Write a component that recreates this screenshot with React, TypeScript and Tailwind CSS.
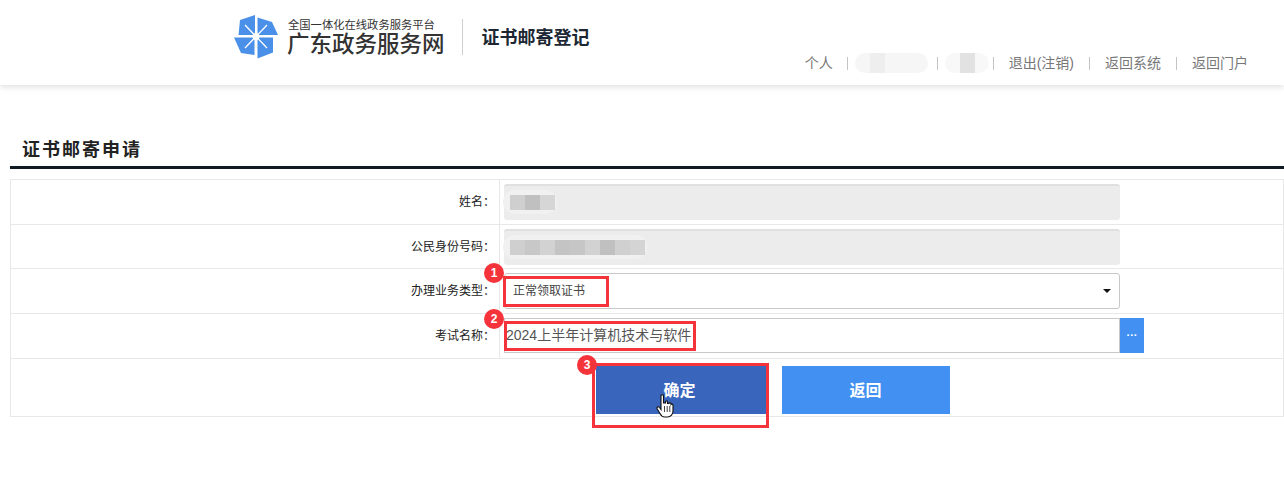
import type { ReactNode } from 'react'

const cjk = 'font-["Liberation_Sans","Noto_Sans_CJK_SC",sans-serif]'

// pixelated blur patches over private values
function Mosaic({ cells, className }: { cells: string[]; className: string }) {
  return (
    <div className={`absolute flex items-center rounded-full bg-[#f1f1f1] pl-[7px] pr-[2px] ${className}`}>
      {cells.map((c, i) => (
        <div key={i} className="h-[15px] w-[15px]" style={{ backgroundColor: c }} />
      ))}
    </div>
  )
}

function Badge({ n, className }: { n: number; className: string }) {
  return (
    <div className={`absolute z-20 flex h-[20px] w-[20px] items-center justify-center rounded-full bg-[#f5333a] text-[12px] font-bold text-white ${className}`}>
      {n}
    </div>
  )
}

function Logo() {
  return (
    <svg width="44" height="44" viewBox="0 0 44 44" className="shrink-0">
      <path d="M6 5 L21 0 L21 20 L4.500 20 Z" fill="#4a90e8" />
      <path d="M23.500 2.500 L38 7 L44 20 L23.500 20 Z" fill="#4a90e8" />
      <path d="M0 22.500 L20.500 22.500 L20.500 40 L7 38 Z" fill="#4a90e8" />
      <path d="M23.500 22.500 L39 22.500 L39 37.500 L23.500 43.500 Z" fill="#4a90e8" />
      <path d="M11 10 L33 33 M33 10 L11 33" stroke="#ffffff" strokeWidth="1.300" />
      <circle cx="22" cy="21.500" r="3.500" fill="#ffffff" />
    </svg>
  )
}

function NavDivider() {
  return <div className="h-[13px] w-px bg-[#c4c4c4]" />
}

function Row({ label, height, children }: { label: string; height: string; children: ReactNode }) {
  return (
    <div className={`flex border-b border-[#e8e8e8] ${height}`}>
      <div className="flex w-[489px] shrink-0 items-center justify-end border-r border-[#e8e8e8] pr-[4px] text-[12px] text-[#222]">
        {label}：
      </div>
      <div className="relative flex-1 pl-[4px] pt-[4px]">{children}</div>
    </div>
  )
}

export default function App() {
  return (
    <div className={`relative h-[489px] w-[1284px] overflow-hidden bg-white ${cjk}`}>
      <header className="flex h-[85px] items-start justify-between pl-[234px] pr-[36px] shadow-[0_2px_6px_rgba(0,0,0,0.13)]">
        <div className="flex items-center pt-[15px]">
          <Logo />
          <div className="ml-[10px] flex flex-col pt-[2px]">
            <span className="text-[11.300px] leading-[14px] text-[#333]">全国一体化在线政务服务平台</span>
            <span className="-ml-[1px] text-[22.500px] font-medium leading-[26px] text-[#333]">广东政务服务网</span>
          </div>
          <div className="ml-[17px] h-[36px] w-px bg-[#cfcfcf]" />
          <div className="ml-[19px] pt-[2px] text-[18px] font-bold text-[#1c2733]">证书邮寄登记</div>
        </div>
        <nav className="mt-[53px] flex items-center text-[14px] leading-[20px] text-[#777]">
          <span>个人</span>
          <span className="ml-[14px]"><NavDivider /></span>
          <div className="ml-[7px] flex h-[20px] w-[73px] overflow-hidden rounded-full bg-[#f6f6f6]">
            <div className="ml-[15px] h-full w-[15px] bg-[#eeeeee]" />
          </div>
          <span className="ml-[9px]"><NavDivider /></span>
          <div className="ml-[7px] flex h-[20px] w-[44px] overflow-hidden rounded-full bg-[#f8f8f8]">
            <div className="ml-[15px] h-full w-[15px] bg-[#e2e2e2]" />
          </div>
          <span className="ml-[4px]"><NavDivider /></span>
          <span className="ml-[15px]">退出(注销)</span>
          <span className="ml-[15px]"><NavDivider /></span>
          <span className="ml-[15px]">返回系统</span>
          <span className="ml-[15px]"><NavDivider /></span>
          <span className="ml-[15px]">返回门户</span>
        </nav>
      </header>

      <main className="pl-[10px] pt-[50px]">
        <h2 className="h-[34px] border-b-[3px] border-[#101a24] pl-[12px] text-[18px] font-bold leading-[30px] tracking-[2px] text-[#222]">
          证书邮寄申请
        </h2>
        <div className="mt-[10px] border border-b-0 border-[#e8e8e8]">
          <Row label="姓名" height="h-[45px]">
            <div className="h-[36px] w-[616px] rounded-[3px] border-t-2 border-[#e0e0e0] bg-[#ececec]" />
            <Mosaic cells={['#cfcfcf', '#c0c0c0', '#d6d6d6']} className="left-[3px] top-[10px] h-[24px]" />
          </Row>
          <Row label="公民身份号码" height="h-[44px]">
            <div className="h-[36px] w-[616px] rounded-[3px] border-t-2 border-[#e0e0e0] bg-[#ececec]" />
            <Mosaic
              cells={['#cfcfcf', '#c8c8c8', '#d2d2d2', '#c4c4c4', '#c6c6c6', '#d2d2d2', '#c0c0c0', '#d0d0d0', '#d4d4d4']}
              className="left-[3px] top-[10px] h-[24px]"
            />
          </Row>
          <Row label="办理业务类型" height="h-[45px]">
            <div className="flex h-[36px] w-[616px] items-center justify-between rounded-[3px] border border-[#c8c8c8] pl-[8px] pr-[8px] text-[12px] text-[#444]">
              <span>正常领取证书</span>
              <div className="h-0 w-0 border-x-[4px] border-t-[4px] border-x-transparent border-t-[#111]" />
            </div>
          </Row>
          <Row label="考试名称" height="h-[45px]">
            <div className="flex items-stretch">
              <div className="flex h-[35px] w-[616px] items-center border border-[#c8c8c8] pl-[1px] text-[14px] text-[#555]">
                2024上半年计算机技术与软件
              </div>
              <div className="flex h-[35px] w-[24px] items-center justify-center bg-[#4190f2] text-[11px] font-bold leading-none text-white">
                ···
              </div>
            </div>
          </Row>
          <div className="flex h-[58px] gap-[16px] border-b border-[#e8e8e8] pl-[585px] pt-[7px]">
            <button className="h-[48px] w-[170px] bg-[#3965bd] pr-[3px] pt-[1px] text-[16px] font-bold text-white">确定</button>
            <button className="h-[48px] w-[168px] bg-[#4190f2] pr-[1px] pt-[1px] text-[16px] font-bold text-white">返回</button>
          </div>
        </div>
      </main>

      {/* red annotation boxes */}
      <div className="absolute left-[503px] top-[276px] h-[31px] w-[106px] border-[3px] border-[#f5333a]" />
      <div className="absolute left-[504px] top-[321px] h-[30px] w-[192px] border-[3px] border-[#f5333a]" />
      <div className="absolute left-[592px] top-[363px] h-[65px] w-[177px] border-[3px] border-[#f5333a]" />
      <Badge n={1} className="left-[484px] top-[263px]" />
      <Badge n={2} className="left-[484px] top-[309px]" />
      <Badge n={3} className="left-[577px] top-[355px]" />

      {/* hand cursor */}
      <svg width="18" height="24" viewBox="0 0 18 24" className="absolute left-[656px] top-[394px] z-10">
        <path
          d="M5 1.500 C5 .5 7.500 .5 7.500 1.500 L7.500 9 L9.500 9 L9.500 7.500 C9.500 6.800 11.500 6.800 11.500 7.500 L11.500 9.500 L13 9.500 C13 8.500 15 8.500 15 9.500 L15 10.500 C15.500 9.800 17 10 17 11 L17 17 C17 20 15 23 11.500 23 L8.500 23 C6 23 5 21.500 4 19.500 L1 14.500 C.5 13 2.500 12 3.500 13.500 L5 15.500 Z"
          fill="#fff"
          stroke="#111"
          strokeWidth="1.100"
        />
        <path d="M8.500 12 L8.500 18 M11.200 12 L11.200 18 M13.800 12 L13.800 18" stroke="#111" strokeWidth="0.800" />
      </svg>
    </div>
  )
}
